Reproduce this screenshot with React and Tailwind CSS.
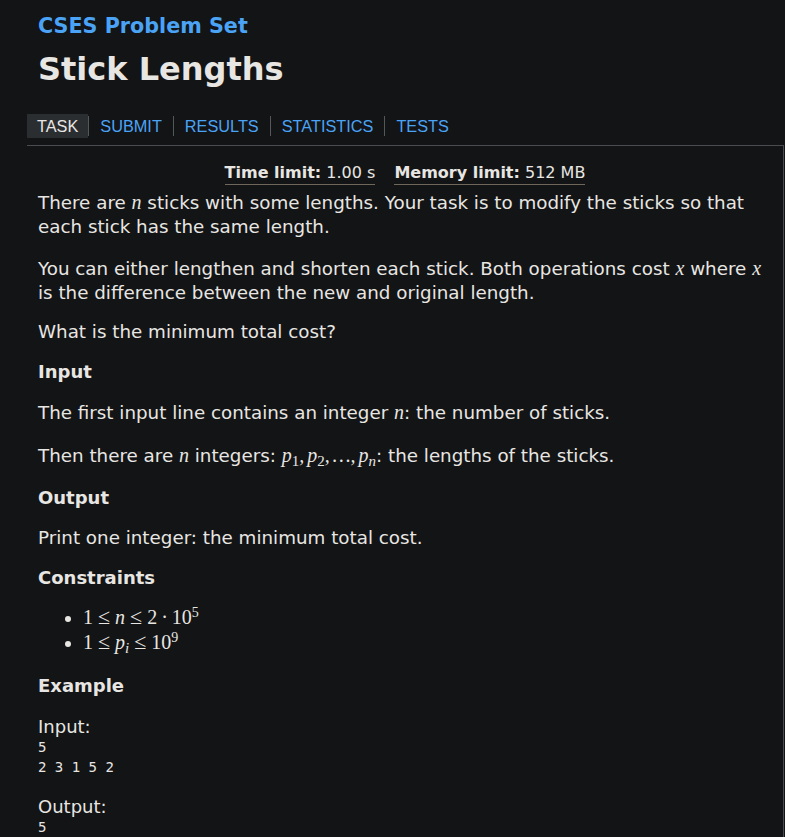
import React from 'react'

const M = ({ children }) => (
  <span className="font-['Liberation_Serif',serif] italic text-[20px] leading-none">{children}</span>
)

const R = ({ children }) => (
  <span className="font-['Liberation_Serif',serif] text-[20px] leading-none">{children}</span>
)

const Le = () => <R><span className="mx-[5px] text-[22px]">≤</span></R>

const tabs = ['SUBMIT', 'RESULTS', 'STATISTICS', 'TESTS']

const Tabs = () => (
  <nav className="ml-[27px] mt-[25px] flex items-center h-[24px] font-['Liberation_Sans',sans-serif] text-[16.3px] leading-[24px]">
    <span className="px-[10px] bg-[#2b2e31] text-[#e8e6e3]">TASK</span>
    {tabs.map((t) => (
      <React.Fragment key={t}>
        <span className="w-px h-[20px] bg-[#55585b]" />
        <a className="px-[11px] text-[#4aa3f5]">{t}</a>
      </React.Fragment>
    ))}
  </nav>
)

const Heading = ({ children, className }) => (
  <h3 className={`text-[18px] leading-[24px] font-bold ${className}`}>{children}</h3>
)

const App = () => {
  return (
    <div className="min-h-screen bg-[#131415] text-[#e8e6e3] font-['DejaVu_Sans',sans-serif] text-[18.3px]">
      <div className="pl-[38px] pt-[12px]">
        <h1 className="text-[20.7px] leading-[28px] font-bold text-[#4aa3f5]">CSES Problem Set</h1>
        <h2 className="mt-[9px] text-[32px] leading-[40px] font-bold">Stick Lengths</h2>
      </div>
      <Tabs />
      <div className="ml-[27px] w-[757px] mt-[7px] min-h-[700px] border-t border-r border-[#4a4c4f] px-[11px] pb-4 leading-[24px]">
        <div className="mt-[17px] flex justify-center gap-[19px] text-[16px] leading-[20px]">
          <span className="pb-[1px] border-b border-[#6f675b]">
            <b>Time limit:</b> 1.00 s
          </span>
          <span className="pb-[1px] border-b border-[#6f675b]">
            <b>Memory limit:</b> 512 MB
          </span>
        </div>
        <p className="mt-[6px]">
          There are <M>n</M> sticks with some lengths. Your task is to modify the sticks so that each stick has
          the same length.
        </p>
        <p className="mt-[18px]">
          You can either lengthen and shorten each stick. Both operations cost <M>x</M> where <M>x</M> is the
          difference between the new and original length.
        </p>
        <p className="mt-[15px]">What is the minimum total cost?</p>
        <Heading className="mt-[16px]">Input</Heading>
        <p className="mt-[17px]">
          The first input line contains an integer <M>n</M>: the number of sticks.
        </p>
        <p className="mt-[19px]">
          Then there are <M>n</M> integers:{' '}
          <M>
            p<sub className="not-italic">1</sub>,<span className="ml-[3px]" />p<sub className="not-italic">2</sub>,
            <span className="ml-[3px]" />…,<span className="ml-[3px]" />p<sub>n</sub>
          </M>
          : the lengths of the sticks.
        </p>
        <Heading className="mt-[18px]">Output</Heading>
        <p className="mt-[16px]">Print one integer: the minimum total cost.</p>
        <Heading className="mt-[16px]">Constraints</Heading>
        <ul className="mt-[15px] list-disc pl-[45px] leading-[25px]">
          <li>
            <R>1</R>
            <Le />
            <M>n</M>
            <Le />
            <R>2</R>
            <R><span className="mx-[4px]">·</span></R>
            <R>10</R>
            <sup className="font-['Liberation_Serif',serif] text-[14px]">5</sup>
          </li>
          <li>
            <R>1</R>
            <Le />
            <M>
              p<sub>i</sub>
            </M>
            <Le />
            <R>10</R>
            <sup className="font-['Liberation_Serif',serif] text-[14px]">9</sup>
          </li>
        </ul>
        <Heading className="mt-[19px]">Example</Heading>
        <p className="mt-[19px] text-[18px] leading-[20px]">Input:</p>
        <pre className="font-['DejaVu_Sans_Mono',monospace] text-[14px] leading-[20px]">
          {'5\n2 3 1 5 2'}
        </pre>
        <p className="mt-[20px] text-[18px] leading-[20px]">Output:</p>
        <pre className="font-['DejaVu_Sans_Mono',monospace] text-[14px] leading-[20px]">{'5'}</pre>
      </div>
    </div>
  )
}

export default App
